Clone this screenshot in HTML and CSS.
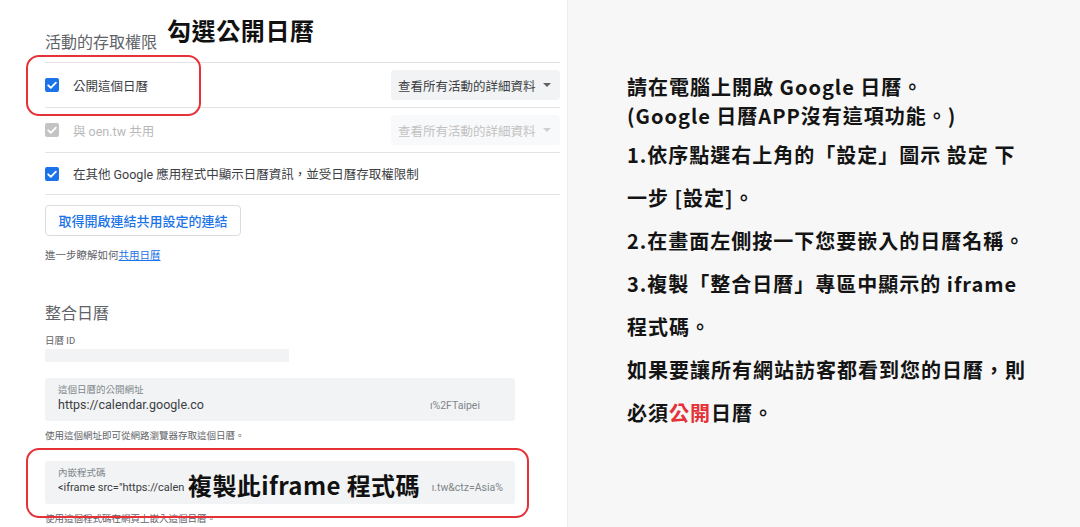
FILE: index.html
```html
<!DOCTYPE html>
<html lang="zh-Hant">
<head>
<meta charset="utf-8">
<title>Google 日曆 嵌入說明</title>
<link rel="stylesheet" href="styles.css">
</head>
<body>
<div class="page">
  <section class="left">
    <h2 class="section-title">活動的存取權限</h2>
    <div class="list">
      <div class="row">
        <span class="cb"><svg viewBox="0 0 14 14" width="14" height="14"><path d="M3.2 7.3 L5.8 9.9 L10.9 4.6" fill="none" stroke="#fff" stroke-width="1.8" stroke-linecap="round" stroke-linejoin="round"/></svg></span>
        <span class="row-text">公開這個日曆</span>
        <span class="select"><span>查看所有活動的詳細資料</span><span class="caret"></span></span>
      </div>
      <div class="row">
        <span class="cb cb-disabled"><svg viewBox="0 0 14 14" width="14" height="14"><path d="M3.2 7.3 L5.8 9.9 L10.9 4.6" fill="none" stroke="#fff" stroke-width="1.8" stroke-linecap="round" stroke-linejoin="round"/></svg></span>
        <span class="row-text row-text-disabled">與 oen.tw 共用</span>
        <span class="select select-disabled"><span>查看所有活動的詳細資料</span><span class="caret"></span></span>
      </div>
      <div class="row row-short">
        <span class="cb"><svg viewBox="0 0 14 14" width="14" height="14"><path d="M3.2 7.3 L5.8 9.9 L10.9 4.6" fill="none" stroke="#fff" stroke-width="1.8" stroke-linecap="round" stroke-linejoin="round"/></svg></span>
        <span class="row-text">在其他 Google 應用程式中顯示日曆資訊，並受日曆存取權限制</span>
      </div>
    </div>
    <button class="btn" type="button">取得開啟連結共用設定的連結</button>
    <p class="learn">進一步瞭解如何<a href="#">共用日曆</a></p>

    <h2 class="section-title section-title-2">整合日曆</h2>
    <div class="small-label">日曆 ID</div>
    <div class="id-bar"></div>

    <div class="field field-url">
      <div class="field-label">這個日曆的公開網址</div>
      <div class="field-value"><span>https://calendar.google.co</span><span class="tail tail-url">ı%2FTaipei</span></div>
    </div>
    <p class="helper">使用這個網址即可從網路瀏覽器存取這個日曆。</p>

    <div class="field field-code">
      <div class="field-label">內嵌程式碼</div>
      <div class="field-value"><span class="code-head">&lt;iframe src="https://calen</span><span class="tail tail-code">ı.tw&amp;ctz=Asia%</span></div>
    </div>
    <p class="helper">使用這個程式碼在網頁上嵌入這個日曆。</p>

    <div class="mark mark-1"></div>
    <div class="mark mark-2"></div>
    <div class="note note-1">勾選公開日曆</div>
    <div class="note note-2">複製此iframe 程式碼</div>
  </section>

  <section class="right">
    <p class="para para-first">請在電腦上開啟 Google 日曆。<br>(Google 日曆APP沒有這項功能。)</p>
    <p class="para">1.依序點選右上角的「設定」圖示 設定 下<br>一步 [設定]。</p>
    <p class="para">2.在畫面左側按一下您要嵌入的日曆名稱。</p>
    <p class="para">3.複製「整合日曆」專區中顯示的 iframe<br>程式碼。</p>
    <p class="para">如果要讓所有網站訪客都看到您的日曆，則<br>必須<span class="red">公開</span>日曆。</p>
  </section>
</div>
</body>
</html>
```

FILE: styles.css
```css
* { box-sizing: border-box; }

html, body {
  margin: 0;
  padding: 0;
  width: 1080px;
  height: 527px;
  overflow: hidden;
  background: #ffffff;
}

.page {
  display: flex;
  width: 1080px;
  height: 527px;
}

/* ---------- left: settings panel ---------- */
.left {
  position: relative;
  width: 567px;
  flex: none;
  padding: 33px 7px 0 45px;
  background: #ffffff;
  font-family: Roboto, "Noto Sans CJK TC", sans-serif;
  color: #3c4043;
}

.section-title {
  margin: 0;
  font-size: 16px;
  line-height: 20px;
  font-weight: 400;
  color: #5f6368;
  height: 29px;
}

.list {
  border-bottom: 1px solid #e3e3e3;
}

.row {
  display: flex;
  align-items: center;
  height: 45px;
  border-top: 1px solid #e3e3e3;
}

.row-short { height: 42px; }

.cb {
  width: 14px;
  height: 14px;
  flex: none;
  border-radius: 2px;
  background: #1a73e8;
  display: flex;
}

.cb-disabled { background: #c4c4c4; }

.row-text {
  margin-left: 14px;
  font-size: 12.5px;
  color: #3c4043;
  white-space: nowrap;
}

.row-text-disabled { color: #b8b8b8; }

.select {
  margin-left: auto;
  width: 169px;
  height: 30px;
  border-radius: 4px;
  background: #f1f3f4;
  display: flex;
  align-items: center;
  justify-content: space-between;
  padding: 0 9px 0 7px;
  font-size: 12.5px;
  color: #3c4043;
}

.select-disabled {
  background: #f8f9fa;
  color: #c2c2c2;
}

.caret {
  width: 0;
  height: 0;
  border-left: 4px solid transparent;
  border-right: 4px solid transparent;
  border-top: 4px solid #5f6368;
}

.select-disabled .caret { border-top-color: #cfcfcf; }

.btn {
  display: block;
  margin-top: 10px;
  width: 196px;
  height: 31px;
  border: 1px solid #dadce0;
  border-radius: 4px;
  background: #ffffff;
  font-family: Roboto, "Noto Sans CJK TC", sans-serif;
  font-size: 13px;
  font-weight: 500;
  color: #1a73e8;
  padding: 0;
}

.learn {
  margin: 12px 0 0;
  font-size: 10.5px;
  line-height: 16px;
  color: #5f6368;
}

.learn a {
  color: #1a73e8;
  text-decoration: underline;
}

.section-title-2 {
  margin-top: 40px;
  height: 30px;
}

.small-label {
  font-size: 9.5px;
  line-height: 14px;
  color: #5f6368;
}

.id-bar {
  margin-top: 1px;
  width: 244px;
  height: 13px;
  background: #f1f3f4;
}

.field {
  margin-top: 16px;
  width: 470px;
  height: 43px;
  background: #f1f3f4;
  border-radius: 3px;
  padding: 5px 0 0 13px;
}

.field-code { margin-top: 18px; }

.field-label {
  font-size: 9.5px;
  line-height: 14px;
  color: #80868b;
}

.field-value {
  display: flex;
  align-items: baseline;
  font-size: 12.5px;
  line-height: 16px;
  color: #3c4043;
  white-space: nowrap;
}

.code-head {
  font-size: 11px;
}

.tail {
  margin-left: auto;
  font-size: 10.5px;
  color: #80868b;
}

.tail-url { margin-right: 35px; }
.tail-code { margin-right: 12px; }

.helper {
  margin: 8px 0 0;
  font-size: 9.5px;
  line-height: 14px;
  color: #5f6368;
}

.field-code + .helper { margin-top: 8px; }

/* annotation overlays */
.mark {
  position: absolute;
  border: 2.5px solid #e53238;
  border-radius: 13px;
}

.mark-1 {
  left: 26px;
  top: 55px;
  width: 175px;
  height: 61px;
}

.mark-2 {
  left: 26px;
  top: 448px;
  width: 503px;
  height: 70px;
}

.note {
  position: absolute;
  font-family: "Noto Sans CJK TC", sans-serif;
  font-weight: 700;
  color: #111111;
  white-space: nowrap;
}

.note-1 {
  left: 167px;
  top: 13px;
  font-size: 24px;
  line-height: 34px;
  letter-spacing: 0.6px;
}

.note-2 {
  left: 188px;
  top: 467px;
  font-size: 24px;
  line-height: 36px;
  letter-spacing: 0.4px;
  background: #f1f3f4;
  padding-right: 2px;
}

/* ---------- right: instructions ---------- */
.right {
  flex: 1;
  background: #f7f7f7;
  border-left: 1px solid #ededed;
  padding: 72px 0 0 59px;
  font-family: "Noto Sans CJK TC", sans-serif;
  font-weight: 700;
  font-size: 20px;
  letter-spacing: 1px;
  color: #141414;
}

.para {
  margin: 0;
  line-height: 43px;
  white-space: nowrap;
}

.para-first {
  line-height: 29px;
  margin-bottom: 3px;
}

.red { color: #e53238; }
```
